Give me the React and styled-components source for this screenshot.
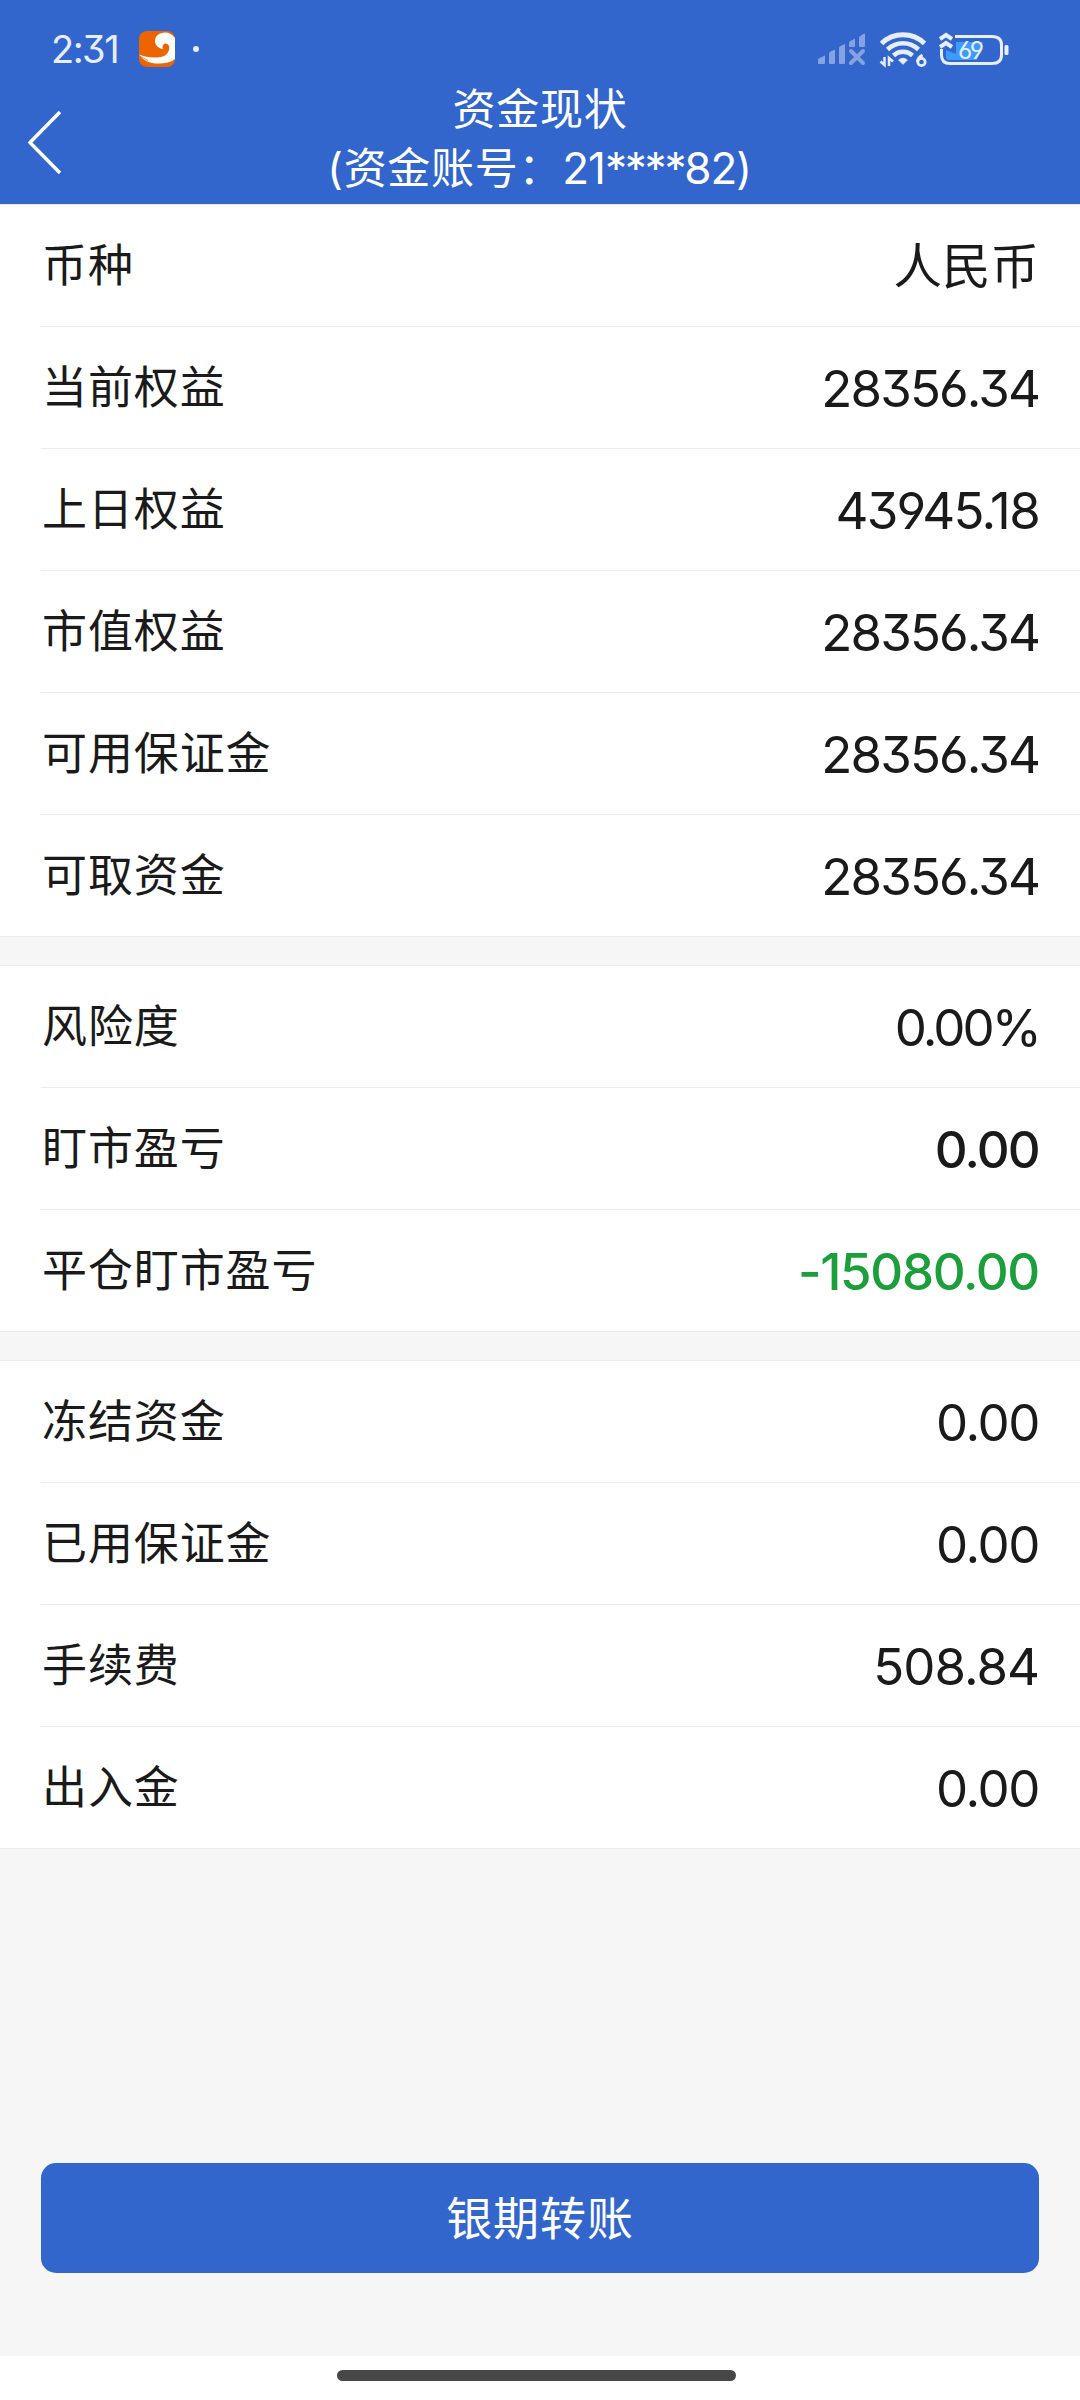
// App.jsx
import React from 'react';
import styled, { createGlobalStyle } from 'styled-components';

const GlobalStyle = createGlobalStyle`
  body {
    margin: 0;
    background-color: #f6f6f6;
    font-family: Inter, 'Noto Sans CJK SC', sans-serif;
    font-feature-settings: 'cv03', 'cv04', 'cv09';
  }
`;

const Page = styled.div`
  display: flex;
  flex-direction: column;
  width: 1080px;
  height: 2400px;
  background-color: #f6f6f6;
  color: #1a1a1a;
`;

const Header = styled.header`
  display: flex;
  flex-direction: column;
  height: 204px;
  background-color: #3266cc;
  color: #fff;
`;

const StatusBar = styled.div`
  display: flex;
  justify-content: space-between;
  height: 80px;
  padding: 0 69px 0 51px;
  box-sizing: border-box;
`;

const StatusGroup = styled.div`
  display: flex;
  align-items: center;
  gap: ${(props) => props.$gap || '0'};
  padding-top: 18px;
`;

const Clock = styled.span`
  width: 88px;
  font-size: 38px;
  line-height: 62px;
  letter-spacing: -1.5px;
  white-space: nowrap;
  color: #e6edfb;
`;

const Dot = styled.span`
  width: 6px;
  height: 6px;
  margin-left: 18px;
  border-radius: 50%;
  background-color: #e6edfb;
`;

const TitleBar = styled.div`
  display: grid;
  grid-template-columns: 100px 1fr 100px;
  height: 124px;
`;

const BackButton = styled.button`
  display: flex;
  padding: 29px 0 0 26px;
  border: none;
  background: none;
`;

const Title = styled.h1`
  margin: 0;
  font-size: 43px;
  font-weight: 400;
  line-height: 59px;
  letter-spacing: 0.7px;
  text-align: center;
  white-space: nowrap;
`;

const AccountDigits = styled.span`
  font-size: 44px;
  line-height: 1;
  letter-spacing: -1px;
`;

const Mask = styled.span`
  letter-spacing: -2.2px;
`;

const Section = styled.section`
  margin-bottom: 28px;
  border-top: 1px solid #ececec;
  border-bottom: 1px solid #ececec;
  background-color: #fff;
`;

const Row = styled.div`
  display: flex;
  align-items: center;
  justify-content: space-between;
  height: 121px;
  margin-left: 41px;
  padding-right: 41px;

  & + & {
    border-top: 1px solid #ececec;
  }
`;

const Label = styled.span`
  padding-left: 1px;
  font-size: 45px;
  line-height: 60px;
  letter-spacing: 0.9px;
`;

const Value = styled.span`
  padding-top: 3px;
  font-size: ${(props) => props.$size || '51px'};
  line-height: 60px;
  font-weight: ${(props) => (props.$bold ? 500 : 400)};
  letter-spacing: ${(props) => props.$spacing || '-1.9px'};
  color: ${(props) => props.$color || '#1a1a1a'};
`;

const Footer = styled.footer`
  display: flex;
  flex-direction: column;
  align-items: center;
  margin-top: auto;
`;

const TransferButton = styled.button`
  width: 998px;
  height: 110px;
  margin-bottom: 83px;
  padding: 0 0 7px;
  border: none;
  border-radius: 15px;
  background-color: #3266cc;
  color: #fff;
  font-family: inherit;
  font-size: 46px;
  letter-spacing: 0.9px;
`;

const NavBar = styled.div`
  display: flex;
  justify-content: center;
  width: 100%;
  height: 44px;
  padding: 14px 7px 0 0;
  box-sizing: border-box;
  background-color: #fff;
`;

const HomeIndicator = styled.div`
  width: 399px;
  height: 11px;
  border-radius: 6px;
  background-color: #474747;
`;

const sections = [
  [
    { label: '币种', value: '人民币', size: '48.5px', spacing: '0' },
    { label: '当前权益', value: '28356.34' },
    { label: '上日权益', value: '43945.18', spacing: '-1.7px' },
    { label: '市值权益', value: '28356.34' },
    { label: '可用保证金', value: '28356.34' },
    { label: '可取资金', value: '28356.34' },
  ],
  [
    { label: '风险度', value: '0.00%', spacing: '-2.9px' },
    { label: '盯市盈亏', value: '0.00', bold: true, spacing: '-1.8px' },
    { label: '平仓盯市盈亏', value: '-15080.00', bold: true, color: '#1a9f3b', spacing: '-1.3px' },
  ],
  [
    { label: '冻结资金', value: '0.00', spacing: '-1.4px' },
    { label: '已用保证金', value: '0.00', spacing: '-1.4px' },
    { label: '手续费', value: '508.84', spacing: '-1px' },
    { label: '出入金', value: '0.00', spacing: '-1.4px' },
  ],
];

const AppLogo = () => (
  <svg width="36" height="36" viewBox="0 0 36 36">
    <rect width="36" height="36" rx="8" fill="#ec6500" />
    <path
      d="M0 23.500C8 27 18 27.500 25 25C29 23 31 18.500 30 15C29 12 25.500 11.500 24 14C23.300 15.500 23.500 17 24 18C19 17.500 16 14 16 10C16 5 20.500 1.500 26 1.500C30 1.500 33.500 3.500 36 7V28C31 32 24 33 17 32.500C10 32 4 29 0 23.500Z"
      fill="#fff"
    />
    <path d="M0 24.500L9 29.500M0 26.500L7 30.500" stroke="#ec6500" strokeWidth="0.7" />
  </svg>
);

const SignalIcon = () => (
  <svg width="50" height="34" viewBox="0 0 50 34" fill="#84a3e0">
    <path d="M1 31V28Q1 26.500 2.500 26L8 23.500V31Q8 32 7 32H2Q1 32 1 31Z" />
    <path d="M12 31V22Q12 20.500 13.500 19.500L18 17.500V31Q18 32 17 32H13Q12 32 12 31Z" />
    <path d="M22 31V16Q22 14.500 23.500 14L28 12V31Q28 32 27 32H23Q22 32 22 31Z" />
    <path d="M32 14V11Q32 9.500 33.500 9L38 6.500V14Q38 15 37 15H33Q32 15 32 14Z" />
    <path d="M42 14V6Q42 4.500 43.500 4L47 1.500Q48 1 48 2.500V14Q48 15 47 15H43Q42 15 42 14Z" />
    <path d="M34 19L46 31M46 19L34 31" stroke="#84a3e0" strokeWidth="4" strokeLinecap="round" />
  </svg>
);

const WifiIcon = () => (
  <svg width="48" height="38" viewBox="0 0 48 38" fill="none" stroke="#e6edfb">
    <path d="M2.500 13.500A31 31 0 0 1 45.500 13.500" strokeWidth="5" />
    <path d="M8.500 19.500A22.500 22.500 0 0 1 39.500 19.500" strokeWidth="4.500" />
    <path d="M14.500 25.500A14 14 0 0 1 33.500 25.500" strokeWidth="4.500" />
    <path d="M24 34.500L19.500 30Q24 26 28.500 30Z" fill="#e6edfb" strokeWidth="0.5" />
    <path d="M5.500 27V35L1.500 31.500M10 36V28L14 31.500" strokeWidth="2.500" />
    <path d="M43.500 25Q38.500 28 38.500 32" strokeWidth="3" />
    <circle cx="42.500" cy="32" r="3.700" strokeWidth="2.700" />
  </svg>
);

const BatteryIcon = () => (
  <svg width="72" height="38" viewBox="0 0 72 38">
    <path d="M7 20L17 24V12H44L38 30H10Q7 30 7 27Z" fill="#3d9bff" />
    <path
      d="M16 6.500H53Q62.500 6.500 62.500 15V25Q62.500 33.500 53 33.500H11Q2.500 33.500 2.500 25V19"
      fill="none"
      stroke="#e6edfb"
      strokeWidth="3"
    />
    <rect x="65.500" y="15" width="4" height="10" rx="1.500" fill="#e6edfb" />
    <path d="M1 9L7 5L13 9M1 17L7 13L13 17" fill="none" stroke="#e6edfb" strokeWidth="4" />
    <text x="19" y="28.500" fontSize="24.500" letterSpacing="-1.500" fill="#e6edfb">69</text>
  </svg>
);

const App = () => {
  return (
    <Page>
      <GlobalStyle />
      <Header>
        <StatusBar>
          <StatusGroup>
            <Clock>2:31</Clock>
            <AppLogo />
            <Dot />
          </StatusGroup>
          <StatusGroup $gap="12px">
            <SignalIcon />
            <WifiIcon />
            <BatteryIcon />
          </StatusGroup>
        </StatusBar>
        <TitleBar>
          <BackButton aria-label="返回">
            <svg width="36" height="66" viewBox="0 0 36 66" fill="none" stroke="#fff" strokeWidth="3.500">
              <path d="M34 3L4 33.500L34 64" />
            </svg>
          </BackButton>
          <Title>
            <div>资金现状</div>
            <div>
              (资金账号：
              <AccountDigits>
                21<Mask>****</Mask>82
              </AccountDigits>
              )
            </div>
          </Title>
        </TitleBar>
      </Header>

      {sections.map((rows, index) => (
        <Section key={index}>
          {rows.map((row) => (
            <Row key={row.label}>
              <Label>{row.label}</Label>
              <Value $bold={row.bold} $color={row.color} $size={row.size} $spacing={row.spacing}>
                {row.value}
              </Value>
            </Row>
          ))}
        </Section>
      ))}

      <Footer>
        <TransferButton>银期转账</TransferButton>
        <NavBar>
          <HomeIndicator />
        </NavBar>
      </Footer>
    </Page>
  );
};

export default App;
